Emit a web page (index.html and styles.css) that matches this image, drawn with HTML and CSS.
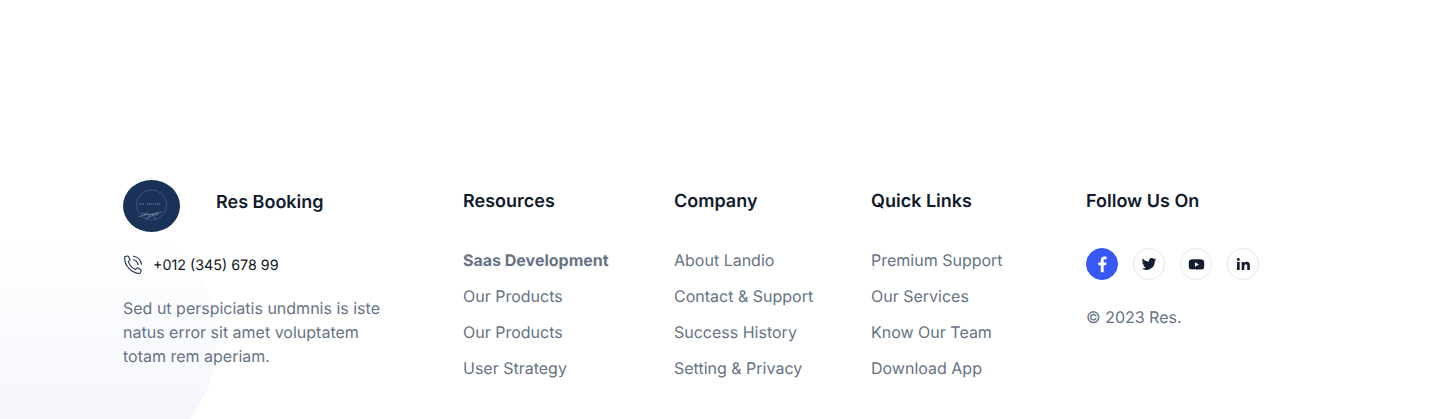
FILE: index.html
```html
<!DOCTYPE html>
<html lang="en">
<head>
<meta charset="utf-8">
<title>Res Booking</title>
<link rel="stylesheet" href="styles.css">
</head>
<body>
<footer class="footer">
  <div class="blob"></div>
  <div class="grid">
    <div class="about">
      <div class="brand">
        <svg class="logo" viewBox="0 0 57 52" aria-hidden="true">
          <ellipse cx="28.500" cy="26" rx="28.500" ry="26" fill="#1a3158"/>
          <circle cx="28.500" cy="25" r="15" fill="none" stroke="#5f7896" stroke-width=".5"/>
          <path d="M15 37l10-3 10 1M18 33l8 2 10-3M22 39l9-4 8-3M21 36l3-4M29 35l4 4M27 34l-2 4" fill="none" stroke="#7d93ab" stroke-width=".6"/>
          <path d="M16 24h5M24 24h14" stroke="#6f86a0" stroke-width="1" stroke-dasharray="1.200 .8"/>
        </svg>
        <span class="brand-name">Res Booking</span>
      </div>
      <div class="phone">
        <svg class="phone-icon" viewBox="0 0 20 20" fill="none" stroke="#1f3354" stroke-width="1.100" stroke-linecap="round" stroke-linejoin="round" aria-hidden="true">
          <path d="M2.200 1.600 4.600 1c.4-.1.7.1.9.4l1.400 3c.2.3.1.7-.2.9L5.200 6.600c1 2.900 4 6.400 7.400 8l1.400-1.500c.3-.3.700-.3 1-.1l2.800 1.800c.3.200.4.500.3.800l-.7 2.300c-.1.400-.5.600-.9.600C8.300 18.300 1.500 10.500 1.600 2.400c0-.4.200-.7.600-.8Z"/>
          <path d="M10.200 4.800c2.500.5 4.300 2.300 4.900 4.800"/>
          <path d="M10.400 1.200c4.300.6 7.500 3.800 8.200 8.100"/>
        </svg>
        <span class="phone-number">+012 (345) 678 99</span>
      </div>
      <p class="desc">Sed ut perspiciatis undmnis is iste natus error sit amet voluptatem totam rem aperiam.</p>
    </div>
    <div class="col">
      <h3>Resources</h3>
      <ul>
        <li class="active">Saas Development</li>
        <li>Our Products</li>
        <li>Our Products</li>
        <li>User Strategy</li>
      </ul>
    </div>
    <div class="col">
      <h3>Company</h3>
      <ul>
        <li>About Landio</li>
        <li>Contact &amp; Support</li>
        <li>Success History</li>
        <li>Setting &amp; Privacy</li>
      </ul>
    </div>
    <div class="col">
      <h3>Quick Links</h3>
      <ul>
        <li>Premium Support</li>
        <li>Our Services</li>
        <li>Know Our Team</li>
        <li>Download App</li>
      </ul>
    </div>
    <div class="col">
      <h3>Follow Us On</h3>
      <div class="socials">
        <span class="social fb">
          <svg viewBox="0 0 24 24" width="20" height="20" aria-hidden="true"><path fill="#fff" d="M14 22v-8.500h2.900l.5-3.400H14V8c0-1 .4-1.700 1.800-1.700h1.700V3.200c-.4 0-1.400-.2-2.600-.2-2.600 0-4.400 1.600-4.400 4.500v2.600H7.600v3.400h2.900V22Z"/></svg>
        </span>
        <span class="social">
          <svg viewBox="0 0 24 24" width="16" height="16" aria-hidden="true"><path fill="#141d30" d="M23 5.100c-.8.400-1.700.6-2.600.7.900-.6 1.600-1.400 2-2.500-.9.500-1.800.9-2.900 1.100A4.500 4.500 0 0 0 11.800 8.500C8 8.300 4.700 6.500 2.500 3.800 1.300 5.900 1.900 8.500 3.900 9.800c-.7 0-1.400-.2-2-.6 0 2.200 1.500 4 3.600 4.500-.7.200-1.400.2-2 .1.600 1.800 2.200 3.100 4.200 3.100A9.100 9.100 0 0 1 1 18.800 12.800 12.800 0 0 0 20.700 7.400c.9-.6 1.700-1.400 2.300-2.300Z"/></svg>
        </span>
        <span class="social">
          <svg viewBox="0 0 24 24" width="17" height="17" aria-hidden="true"><path fill="#141d30" d="M22.500 7.200a2.800 2.800 0 0 0-2-2C18.800 4.700 12 4.700 12 4.700s-6.800 0-8.500.5a2.800 2.800 0 0 0-2 2C1 8.900 1 12 1 12s0 3.100.5 4.800a2.800 2.800 0 0 0 2 2c1.700.5 8.500.5 8.500.5s6.800 0 8.500-.5a2.800 2.800 0 0 0 2-2c.5-1.700.5-4.800.5-4.800s0-3.100-.5-4.800ZM9.800 15.200V8.800l5.700 3.200Z"/></svg>
        </span>
        <span class="social">
          <svg viewBox="0 0 24 24" width="16" height="16" aria-hidden="true"><path fill="#141d30" d="M3 9h4v12H3ZM5 3a2.200 2.200 0 1 1 0 4.400A2.200 2.200 0 0 1 5 3Zm5 6h3.800v1.700c.6-1 1.900-2 3.800-2 4 0 4.700 2.600 4.700 6V21h-4v-5.500c0-1.400 0-3.100-1.900-3.100s-2.400 1.500-2.400 3V21h-4Z"/></svg>
        </span>
      </div>
      <p class="copy">© 2023 Res.</p>
    </div>
  </div>
</footer>
</body>
</html>
```
FILE: styles.css
```css
* { box-sizing: border-box; }
html, body { margin: 0; padding: 0; }
body {
  background: #fff;
  font-family: Inter, "Liberation Sans", sans-serif;
  color: #667384;
  text-rendering: geometricPrecision;
}
.footer {
  position: relative;
  height: 419px;
  overflow: hidden;
  padding: 180px 0 0 123px;
}
.blob {
  position: absolute;
  left: -41px;
  top: 211px;
  width: 258px;
  height: 258px;
  border-radius: 50%;
  background: linear-gradient(180deg, #fff 10%, #f4f6fc 85%);
}
.grid {
  position: relative;
  display: grid;
  grid-template-columns: 340px 211px 197px 215px 1fr;
}
.brand { display: flex; align-items: flex-start; height: 52px; }
.logo { width: 57px; height: 52px; flex: none; }
.brand-name {
  margin: 9px 0 0 36px;
  font-size: 18px;
  font-weight: 600;
  color: #131c2e;
  line-height: 28px;
}
.phone {
  display: flex;
  align-items: center;
  gap: 10px;
  margin-top: 23px;
  height: 20px;
  font-size: 14.300px;
  line-height: 18px;
  color: #0e1420;
}
.phone-number { padding-top: 2px; }
.phone-icon { width: 20px; height: 20px; flex: none; }
.desc {
  margin: 21px 0 0;
  width: 270px;
  font-size: 16px;
  line-height: 24px;
}
h3 {
  margin: 9px 0 0;
  font-size: 18px;
  line-height: 26px;
  font-weight: 600;
  color: #111a2c;
}
ul { list-style: none; margin: 27px 0 0; padding: 0; }
li { font-size: 16px; line-height: 36px; }
.active { font-weight: 700; }
.socials { display: flex; gap: 15px; margin-top: 33px; }
.social {
  width: 32px;
  height: 32px;
  border-radius: 50%;
  border: 1px solid #e4e7f0;
  display: flex;
  align-items: center;
  justify-content: center;
  background: #fff;
}
.fb { background: #3757f7; border-color: #3757f7; }
.copy { margin: 25px 0 0; font-size: 16px; line-height: 24px; }
```
